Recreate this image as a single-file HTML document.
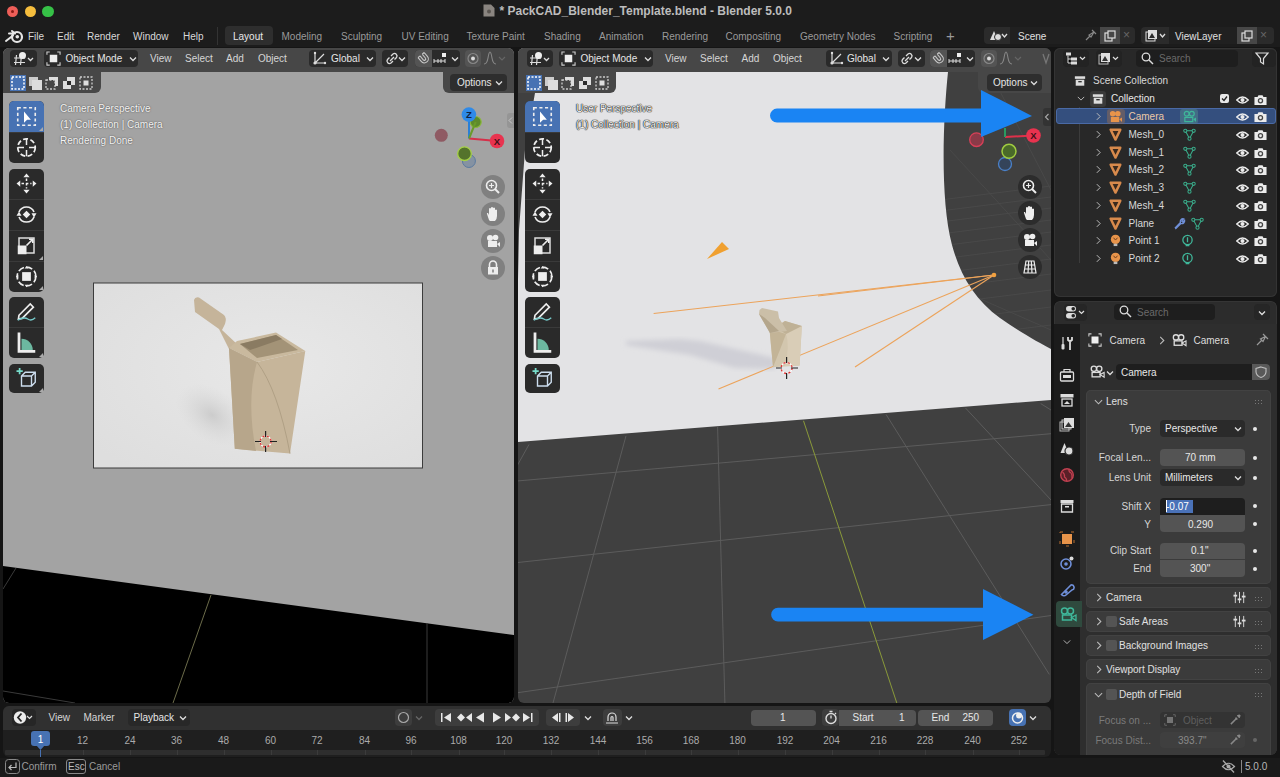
<!DOCTYPE html>
<html><head><meta charset="utf-8">
<style>
*{margin:0;padding:0;box-sizing:border-box}
html,body{width:1280px;height:777px;overflow:hidden;background:#151515;font-family:"Liberation Sans",sans-serif;color:#d0d0d0;font-size:10px}
.a{position:absolute}
.t{position:absolute;white-space:nowrap;line-height:1}
svg{position:absolute;overflow:visible}
.hb{position:absolute;background:#2a2a2a;border-radius:4px}
.tg{position:absolute;background:#2a2a2a;border-radius:5px;width:35px}
.dv{position:absolute;left:0;width:35px;height:1px;background:#3a3a3a}
.nb{position:absolute;width:24px;height:24px;border-radius:50%;background:rgba(40,40,40,0.28)}
.or{position:absolute;white-space:nowrap;line-height:1;color:#d8d8d8}
.ch{position:absolute;width:6px;height:9px}
.pl{position:absolute;white-space:nowrap;line-height:1;color:#d6d6d6;text-align:right}
.pf{position:absolute;background:#545454;border-radius:4px;height:17px}
.pd{position:absolute;background:#282828;border-radius:4px;height:17px}
.dot{position:absolute;width:4px;height:4px;border-radius:50%;background:#e8e8e8}
.pn{position:absolute;left:1086px;width:185px;background:#3b3b3b;border-radius:5px;box-shadow:inset 0 0 0 1px #424242}
.grip{position:absolute;width:9px;height:5px;background-image:radial-gradient(#777 35%,transparent 40%);background-size:3px 3px}
.ov{position:absolute;white-space:nowrap;line-height:1;color:#f4f4f4;text-shadow:0 0 1.5px rgba(0,0,0,.7)}

</style></head><body>
<!-- title bar -->
<div class="a" style="left:0;top:0;width:1280px;height:47px;background:#1c1c1c"></div>
<div class="a" style="left:0;top:758px;width:1280px;height:19px;background:#1a1a1a"></div>
<div class="a" style="left:6.6px;top:5.6px;width:11.2px;height:11.2px;border-radius:50%;background:#ee5e58"></div>
<div class="a" style="left:10.7px;top:9.7px;width:3px;height:3px;border-radius:50%;background:#8b1a14"></div>
<div class="a" style="left:24.6px;top:5.6px;width:11.2px;height:11.2px;border-radius:50%;background:#f5bd3d"></div>
<div class="a" style="left:42.4px;top:5.6px;width:11.2px;height:11.2px;border-radius:50%;background:#36c147"></div>
<svg style="left:483px;top:4px" width="12" height="13" viewBox="0 0 12 13"><path d="M0.5 0.5 H8 L11.5 4 V12.5 H0.5Z" fill="#8a8580"/><circle cx="6" cy="7.5" r="2" fill="#5a5550"/></svg>
<div class="t" style="left:499.5px;top:5px;font-size:12px;font-weight:bold;color:#bdbdbd">* PackCAD_Blender_Template.blend - Blender 5.0.0</div>



<svg width="0" height="0" style="left:0;top:0">
<defs>
<symbol id="i-edtype" viewBox="0 0 26 17"><path d="M3 8 H14 M3 12.5 H14 M5.5 5 L4.5 15 M10.5 5 L9.5 15" stroke="#ddd" stroke-width="1.2" fill="none"/><circle cx="11.5" cy="5.5" r="3.5" fill="#eee"/><path d="M17 8 l2.5 2.5 l2.5 -2.5" stroke="#ddd" stroke-width="1.3" fill="none"/></symbol>
<symbol id="i-objmode" viewBox="0 0 16 16"><path d="M1 4 V1 H4 M12 1 H15 V4 M15 12 V15 H12 M4 15 H1 V12" stroke="#ccc" stroke-width="1.2" fill="none"/><rect x="4" y="4" width="8" height="8" fill="#eee"/></symbol>
<symbol id="i-chev" viewBox="0 0 8 6"><path d="M1 1.5 L4 4.5 L7 1.5" stroke="#ddd" stroke-width="1.3" fill="none"/></symbol>
<symbol id="i-sm1" viewBox="0 0 16 16"><rect x="0" y="0" width="16" height="16" fill="#4772b3"/><rect x="2" y="2" width="12" height="12" fill="none" stroke="#fff" stroke-width="1.5" stroke-dasharray="2 1.5"/></symbol>
<symbol id="i-sm2" viewBox="0 0 16 16"><rect x="2" y="2" width="9" height="9" fill="#ccc"/><rect x="5" y="5" width="10" height="10" fill="#ddd"/></symbol>
<symbol id="i-sm3" viewBox="0 0 16 16"><rect x="2" y="5" width="9" height="9" fill="none" stroke="#ccc" stroke-width="1.3" stroke-dasharray="2 1.5"/><path d="M5 2 H14 V11 H11 V5 H5Z" fill="#ddd"/></symbol>
<symbol id="i-sm4" viewBox="0 0 16 16"><path d="M2 6 H6 V2 H14 V10 H10 V14 H2Z" fill="#ddd"/><rect x="6" y="6" width="4" height="4" fill="#2a2a2a"/></symbol>
<symbol id="i-sm5" viewBox="0 0 16 16"><rect x="2" y="2" width="12" height="12" fill="none" stroke="#ccc" stroke-width="1.3" stroke-dasharray="2 1.5"/><rect x="5.5" y="5.5" width="5" height="5" fill="#ddd"/></symbol>
<symbol id="t-select" viewBox="0 0 20 20"><rect x="3" y="3" width="14" height="14" fill="none" stroke="#eee" stroke-width="1.3" stroke-dasharray="2.5 2"/><path d="M8 6 L8 15 L10.5 12.5 L13.5 12.5 Z" fill="#fff"/></symbol>
<symbol id="t-cursor" viewBox="0 0 20 20"><circle cx="10" cy="10" r="7" fill="none" stroke="#eee" stroke-width="1.4" stroke-dasharray="4 2"/><path d="M10 3 V8 M10 12 V17 M3 10 H8 M12 10 H17" stroke="#eee" stroke-width="1.2"/></symbol>
<symbol id="t-move" viewBox="0 0 20 20"><path d="M10 2 L12.5 5 H7.5Z M10 18 L12.5 15 H7.5Z M2 10 L5 7.5 V12.5Z M18 10 L15 7.5 V12.5Z" fill="#eee"/><path d="M10 6 V14 M6 10 H14" stroke="#eee" stroke-width="1.2" stroke-dasharray="2 1.5"/></symbol>
<symbol id="t-rotate" viewBox="0 0 20 20"><path d="M4 8 A6.5 6.5 0 0 1 16 8 M16 12 A6.5 6.5 0 0 1 4 12" stroke="#eee" stroke-width="1.3" fill="none"/><path d="M2 11 L4 7.5 L6 11Z M14 9 L16 12.5 L18 9Z" fill="#eee"/><path d="M10 7 L13 10 L10 13 L7 10Z" fill="#eee"/></symbol>
<symbol id="t-scale" viewBox="0 0 20 20"><rect x="4" y="4" width="12" height="12" fill="none" stroke="#ddd" stroke-width="1.2"/><rect x="3" y="10" width="7" height="7" fill="#eee"/><path d="M10 10 L15 5 M12 5 H15 V8" stroke="#eee" stroke-width="1.3" fill="none"/></symbol>
<symbol id="t-xform" viewBox="0 0 20 20"><circle cx="10" cy="10" r="7.5" fill="none" stroke="#eee" stroke-width="1.3" stroke-dasharray="5 2"/><rect x="6.5" y="6.5" width="7" height="7" fill="#eee"/><path d="M10 1.5 L11.5 3.5 H8.5Z M10 18.5 L11.5 16.5 H8.5Z M1.5 10 L3.5 8.5 V11.5Z M18.5 10 L16.5 8.5 V11.5Z" fill="#eee"/></symbol>
<symbol id="t-annot" viewBox="0 0 20 20"><path d="M4 13 L13 4 L15.5 6.5 L6.5 15.5 L3.5 16 Z" fill="none" stroke="#eee" stroke-width="1.3"/><path d="M3 17 Q8 14 11 16 Q14 18 17 15" stroke="#7cc" stroke-width="1" fill="none"/></symbol>
<symbol id="t-measure" viewBox="0 0 20 20"><path d="M4 2 V17 H17" stroke="#eee" stroke-width="2.2" fill="none"/><path d="M6 16 V7 A9 9 0 0 1 15 16Z" fill="#6cb8a0"/></symbol>
<symbol id="t-add" viewBox="0 0 20 20"><path d="M2 4 H7 M4.5 1.5 V6.5" stroke="#7dc" stroke-width="1.4"/><path d="M6 8 L9 5 H17 V13 L14 16 H6Z M6 8 H14 V16 M14 8 L17 5" stroke="#cde" stroke-width="1.1" fill="none"/></symbol>
<symbol id="n-zoom" viewBox="0 0 24 24"><circle cx="10.5" cy="10.5" r="5" fill="none" stroke="#eee" stroke-width="1.6"/><path d="M14 14 L18 18" stroke="#eee" stroke-width="2"/><path d="M8 10.5 H13 M10.5 8 V13" stroke="#eee" stroke-width="1.2"/></symbol>
<symbol id="n-hand" viewBox="0 0 24 24"><path d="M8 18 L6 12 Q5.5 10.5 7 11 L8 13 V6.5 Q9 5.5 10 6.5 V11 V5.5 Q11 4.5 12 5.5 V11 V6 Q13 5 14 6 V11.5 V8 Q15 7 16 8 V14 Q16 17 14 19 H9Z" fill="#eee"/></symbol>
<symbol id="n-cam" viewBox="0 0 24 24"><circle cx="9" cy="9" r="3" fill="#eee"/><circle cx="14.5" cy="8.5" r="2.8" fill="#eee"/><rect x="7" y="12" width="9" height="6" fill="#eee"/><path d="M16 15 L19 13 V18 Z" fill="#eee"/></symbol>
<symbol id="n-lock" viewBox="0 0 24 24"><path d="M8.5 11 V8.5 A3.5 3.5 0 0 1 15.5 8.5 V11" stroke="#eee" stroke-width="1.6" fill="none"/><rect x="7" y="11" width="10" height="7.5" fill="#eee"/><rect x="11.3" y="13.5" width="1.4" height="3" fill="#777"/></symbol>
<symbol id="n-grid" viewBox="0 0 24 24"><path d="M8 6 H16 L18 18 H6Z M7 10 H17 M6.5 14 H17.5 M10.7 6 L10 18 M13.3 6 L14 18" stroke="#eee" stroke-width="1.2" fill="none"/></symbol>

<symbol id="o-chevr" viewBox="0 0 6 10"><path d="M1 1 L5 5 L1 9" stroke="#bbb" stroke-width="1.2" fill="none"/></symbol>
<symbol id="o-chevd" viewBox="0 0 10 6"><path d="M1 1 L5 5 L9 1" stroke="#bbb" stroke-width="1.2" fill="none"/></symbol>
<symbol id="o-mesh" viewBox="0 0 14 14"><path d="M1.8 1.8 H12.2 L7 12.5 Z" fill="#3a2a1e" stroke="#d88a4c" stroke-width="2.6" stroke-linejoin="round"/></symbol>
<symbol id="o-meshdata" viewBox="0 0 14 14"><path d="M2.5 3 L11.5 3 L7 11.5 Z" fill="none" stroke="#3aae8c" stroke-width="1.1"/><circle cx="2.5" cy="3" r="1.7" fill="#282828" stroke="#3aae8c" stroke-width="1.1"/><circle cx="11.5" cy="3" r="1.7" fill="#282828" stroke="#3aae8c" stroke-width="1.1"/><circle cx="7" cy="11.5" r="1.7" fill="#282828" stroke="#3aae8c" stroke-width="1.1"/></symbol>
<symbol id="o-light" viewBox="0 0 14 14"><circle cx="7" cy="5.8" r="5" fill="#e8944a"/><path d="M4.8 4 L7 6.5 L9.2 4" stroke="#6a3a1a" stroke-width="1" fill="none"/><rect x="5" y="10.5" width="4" height="2.5" fill="#bbb"/></symbol>
<symbol id="o-lightdata" viewBox="0 0 14 14"><circle cx="7" cy="6.5" r="5" fill="none" stroke="#3fb79a" stroke-width="1.4"/><path d="M7 3.5 V9 M5 12.5 H9" stroke="#3fb79a" stroke-width="1.4"/></symbol>
<symbol id="o-eye" viewBox="0 0 14 10"><path d="M0.8 5 Q7 -1.5 13.2 5 Q7 11.5 0.8 5Z" fill="none" stroke="#ececec" stroke-width="1.5"/><circle cx="7" cy="5" r="2.2" fill="#ececec"/></symbol>
<symbol id="o-cam" viewBox="0 0 14 12"><path d="M0.5 2.8 H3.8 L4.8 0.8 H9.2 L10.2 2.8 H13.5 V11.5 H0.5Z" fill="#ececec"/><circle cx="7" cy="6.8" r="2.9" fill="#444"/><circle cx="7" cy="6.8" r="1.5" fill="#ececec"/></symbol>
<symbol id="o-box" viewBox="0 0 14 14"><rect x="1" y="1.5" width="12" height="3" fill="#ddd"/><path d="M2 5.5 H12 V12.5 H2Z" fill="#ddd"/><rect x="5" y="7" width="4" height="1.6" fill="#333"/></symbol>
<symbol id="o-camobj" viewBox="0 0 16 14"><circle cx="5" cy="4" r="3" fill="#e8944a"/><circle cx="10.5" cy="4" r="3" fill="#e8944a"/><rect x="3" y="7.5" width="9" height="5.5" fill="#e8944a"/><path d="M12 10 L15 8 V13 Z" fill="#e8944a"/></symbol>
<symbol id="o-camdata" viewBox="0 0 16 14"><circle cx="5" cy="4" r="2.6" fill="none" stroke="#3fb79a" stroke-width="1.3"/><circle cx="10.5" cy="4" r="2.6" fill="none" stroke="#3fb79a" stroke-width="1.3"/><rect x="3" y="8" width="8.5" height="4.5" fill="none" stroke="#3fb79a" stroke-width="1.3"/><path d="M12 10 L15 8 V13 Z" fill="#3fb79a"/></symbol>
<symbol id="o-wrench" viewBox="0 0 14 14"><path d="M2 12 L8 6 A3 3 0 0 1 11.5 2 L9.5 4.5 L10.5 5.5 L12.5 3.5 A3 3 0 0 1 8.5 7 L2.5 13" stroke="#6f8fd8" stroke-width="1.4" fill="none"/></symbol>

<symbol id="p-tool" viewBox="0 0 16 16"><path d="M4 2 V9" stroke="#ddd" stroke-width="1.2"/><rect x="2.5" y="9" width="3" height="5.5" rx="1" fill="#ddd"/><path d="M11 15 V7 M9 2 V5 Q11 7 13 5 V2" stroke="#ddd" stroke-width="1.8" fill="none"/></symbol>
<symbol id="p-render" viewBox="0 0 16 16"><rect x="1.5" y="5" width="13" height="9" rx="1" fill="none" stroke="#ddd" stroke-width="1.3"/><path d="M5 5 V2.5 H11 V5" stroke="#ddd" stroke-width="1.2" fill="none"/><rect x="4" y="8" width="8" height="3" fill="#ddd"/></symbol>
<symbol id="p-output" viewBox="0 0 16 16"><rect x="1.5" y="2" width="13" height="3.5" fill="#ddd"/><rect x="3" y="7" width="10" height="7" fill="none" stroke="#ddd" stroke-width="1.3"/><path d="M5 12 L8 9 L11 12Z" fill="#ddd"/></symbol>
<symbol id="p-viewlayer" viewBox="0 0 16 16"><rect x="1" y="5" width="9" height="9" fill="none" stroke="#bbb" stroke-width="1"/><rect x="3" y="3" width="9" height="9" fill="none" stroke="#ccc" stroke-width="1"/><rect x="5" y="1" width="10" height="10" fill="#ddd"/><path d="M6 10 L9.5 5 L13 10Z" fill="#333"/></symbol>
<symbol id="p-scene" viewBox="0 0 16 16"><path d="M1.5 12 L5.5 2 L9.5 12Z" fill="#ddd"/><circle cx="10" cy="10" r="4" fill="#ddd" stroke="#2a2a2a" stroke-width="1.2"/></symbol>
<symbol id="p-world" viewBox="0 0 16 16"><circle cx="8" cy="8" r="6.3" fill="#5a2028" stroke="#c04050" stroke-width="1.4"/><path d="M3.5 5 Q6 7 5.5 10 Q8 11.5 7.5 14 M10 2.2 Q9.5 5 12 6 Q13.5 8 13 11" stroke="#c04050" stroke-width="1.2" fill="none"/></symbol>
<symbol id="p-coll" viewBox="0 0 16 16"><rect x="1.5" y="2" width="13" height="3" fill="#ddd"/><path d="M2.5 6 H13.5 V14 H2.5Z" fill="none" stroke="#ddd" stroke-width="1.3"/><rect x="6" y="8" width="4" height="1.5" fill="#ddd"/></symbol>
<symbol id="p-obj" viewBox="0 0 16 16"><rect x="1" y="1" width="14" height="14" fill="none" stroke="#b86f30" stroke-width="1" stroke-dasharray="3 8"/><rect x="3" y="3" width="10" height="10" fill="#e8944a"/></symbol>
<symbol id="p-phys" viewBox="0 0 16 16"><circle cx="7" cy="9" r="5" fill="none" stroke="#6f8fd8" stroke-width="1.6"/><circle cx="7" cy="9" r="1.8" fill="#6f8fd8"/><circle cx="12.5" cy="3.5" r="2" fill="#ddd"/></symbol>
<symbol id="p-cons" viewBox="0 0 16 16"><path d="M2.5 13.5 L12 4 A2.5 2.5 0 0 1 13 9 L7 14 A3 3 0 0 1 2.5 13.5Z" fill="none" stroke="#6f8fd8" stroke-width="1.6"/><circle cx="7" cy="11" r="1.8" fill="#6f8fd8"/></symbol>
<symbol id="p-camdata" viewBox="0 0 18 16"><circle cx="5.5" cy="5" r="3" fill="none" stroke="#3fb79a" stroke-width="1.5"/><circle cx="11.5" cy="5" r="3" fill="none" stroke="#3fb79a" stroke-width="1.5"/><rect x="3.5" y="9" width="9" height="5" fill="none" stroke="#3fb79a" stroke-width="1.5"/><path d="M12.5 11.5 L17 9 V14.5Z" fill="none" stroke="#3fb79a" stroke-width="1.3"/></symbol>
<symbol id="p-camw" viewBox="0 0 18 16"><circle cx="5.5" cy="5" r="3" fill="none" stroke="#ddd" stroke-width="1.5"/><circle cx="11.5" cy="5" r="3" fill="none" stroke="#ddd" stroke-width="1.5"/><rect x="3.5" y="9" width="9" height="5" fill="none" stroke="#ddd" stroke-width="1.5"/><path d="M12.5 11.5 L17 9 V14.5Z" fill="none" stroke="#ddd" stroke-width="1.3"/></symbol>
<symbol id="p-sliders" viewBox="0 0 14 14"><path d="M2.5 1 V13 M7 1 V13 M11.5 1 V13" stroke="#ddd" stroke-width="1"/><rect x="0.5" y="4" width="4" height="2" fill="#ddd"/><rect x="5" y="8" width="4" height="2" fill="#ddd"/><rect x="9.5" y="5" width="4" height="2" fill="#ddd"/></symbol>
<symbol id="p-pipette" viewBox="0 0 14 14"><path d="M2 12 L8 6 M7 5 L9 7 M9 3 A2 2 0 0 1 11 5" stroke="#888" stroke-width="1.6" fill="none"/><path d="M8.5 2.5 L11.5 5.5 L12.5 3 Q12 1.5 11 1.5Z" fill="#888"/></symbol>
</defs></svg>

<!-- menu bar -->
<svg style="left:4px;top:28px" width="20" height="16" viewBox="0 0 20 16"><circle cx="13" cy="9" r="5" fill="none" stroke="#e6e6e6" stroke-width="2.2"/><circle cx="13.3" cy="8.8" r="1.8" fill="#e6e6e6"/><path d="M2 13 L9 7.5 M5 5.5 H11 M8 3 L11 5.5" stroke="#e6e6e6" stroke-width="2" stroke-linecap="round" fill="none"/></svg>
<div class="t" style="left:28px;top:32px;color:#d8d8d8">File</div>
<div class="t" style="left:57px;top:32px;color:#d8d8d8">Edit</div>
<div class="t" style="left:87px;top:32px;color:#d8d8d8">Render</div>
<div class="t" style="left:133px;top:32px;color:#d8d8d8">Window</div>
<div class="t" style="left:183px;top:32px;color:#d8d8d8">Help</div>
<div class="a" style="left:217px;top:27px;width:1px;height:18px;background:#333"></div>
<div class="a" style="left:225px;top:26px;width:48px;height:19px;background:#2e2e2e;border-radius:4px"></div>
<div class="t" style="left:233px;top:32px;color:#e8e8e8">Layout</div>
<div class="t" style="left:281.5px;top:32px;color:#9a9a9a">Modeling</div>
<div class="t" style="left:341px;top:32px;color:#9a9a9a">Sculpting</div>
<div class="t" style="left:401.5px;top:32px;color:#9a9a9a">UV Editing</div>
<div class="t" style="left:466.5px;top:32px;color:#9a9a9a">Texture Paint</div>
<div class="t" style="left:544px;top:32px;color:#9a9a9a">Shading</div>
<div class="t" style="left:599px;top:32px;color:#9a9a9a">Animation</div>
<div class="t" style="left:662px;top:32px;color:#9a9a9a">Rendering</div>
<div class="t" style="left:725.5px;top:32px;color:#9a9a9a">Compositing</div>
<div class="t" style="left:800px;top:32px;color:#9a9a9a">Geometry Nodes</div>
<div class="t" style="left:893.5px;top:32px;color:#9a9a9a">Scripting</div>
<div class="t" style="left:946px;top:28px;font-size:15px;color:#9a9a9a">+</div>
<!-- scene selector -->
<div class="a" style="left:984px;top:27px;width:151px;height:17px;background:#2b2b2b;border-radius:4px"></div>
<div class="a" style="left:1010px;top:27px;width:90px;height:17px;background:#202020"></div>
<svg style="left:988px;top:29px" width="20" height="13" viewBox="0 0 20 13"><path d="M2 11 L6 2 L10 11 Z" fill="#ddd"/><circle cx="10" cy="8" r="3.5" fill="#ddd" stroke="#2b2b2b" stroke-width="1"/><path d="M14 5 l2.5 3 l2.5 -3" stroke="#ddd" stroke-width="1.3" fill="none"/></svg>
<div class="t" style="left:1018px;top:32px;color:#e0e0e0">Scene</div>
<svg style="left:1085px;top:29px" width="12" height="12" viewBox="0 0 12 12"><path d="M7 1 L11 5 M9 3 L4 6 L6 8 L9 3 M5 7 L1 11" stroke="#888" stroke-width="1.2" fill="none"/></svg>
<div class="a" style="left:1100px;top:27px;width:20px;height:17px;background:#474747"></div>
<svg style="left:1104px;top:30px" width="12" height="12" viewBox="0 0 12 12"><rect x="1" y="3" width="7" height="8" fill="none" stroke="#ddd" stroke-width="1.2"/><rect x="4" y="1" width="7" height="7" fill="#474747" stroke="#ddd" stroke-width="1.2"/></svg>
<div class="t" style="left:1123px;top:29px;font-size:12px;color:#666">×</div>
<div class="a" style="left:1141px;top:27px;width:133px;height:17px;background:#2b2b2b;border-radius:4px"></div>
<div class="a" style="left:1169px;top:27px;width:68px;height:17px;background:#202020"></div>
<svg style="left:1145px;top:29px" width="22" height="13" viewBox="0 0 22 13"><rect x="1" y="3" width="9" height="9" fill="none" stroke="#ddd" stroke-width="1"/><rect x="3" y="1" width="9" height="9" fill="#ddd"/><path d="M4 9 L7 4 L10 9Z" fill="#2b2b2b"/><path d="M15 5 l2.5 3 l2.5 -3" stroke="#ddd" stroke-width="1.3" fill="none"/></svg>
<div class="t" style="left:1175px;top:32px;color:#e0e0e0">ViewLayer</div>
<div class="a" style="left:1237px;top:27px;width:20px;height:17px;background:#474747"></div>
<svg style="left:1241px;top:30px" width="12" height="12" viewBox="0 0 12 12"><rect x="1" y="3" width="7" height="8" fill="none" stroke="#ddd" stroke-width="1.2"/><rect x="4" y="1" width="7" height="7" fill="#474747" stroke="#ddd" stroke-width="1.2"/></svg>
<div class="t" style="left:1260px;top:29px;font-size:12px;color:#666">×</div>

<!-- left viewport -->

<svg style="left:0;top:0" width="1280" height="777">
<defs><clipPath id="cvl"><rect x="3" y="48" width="511" height="655" rx="6"/></clipPath>
<radialGradient id="rimg" cx="0.55" cy="0.45" r="0.7"><stop offset="0" stop-color="#e8e8e8"/><stop offset="1" stop-color="#dedede"/></radialGradient>
<radialGradient id="shad" cx="0.5" cy="0.5" r="0.5"><stop offset="0" stop-color="#c6c6c6" stop-opacity="0.8"/><stop offset="1" stop-color="#d6d6d6" stop-opacity="0"/></radialGradient>
</defs>
<g clip-path="url(#cvl)">
<rect x="3" y="48" width="511" height="655" fill="#a3a3a3"/>
<polygon points="3,566 514,635 514,703 3,703" fill="#000"/>
<line x1="211" y1="595" x2="173" y2="703" stroke="#6b6b4a" stroke-width="1"/>
<line x1="427" y1="623" x2="427" y2="703" stroke="#3a3a3a" stroke-width="1"/>
<line x1="3" y1="691" x2="75" y2="703" stroke="#3a3a3a" stroke-width="1"/>
<line x1="16" y1="568" x2="3" y2="589" stroke="#3a3a3a" stroke-width="1"/>
<rect x="93.5" y="283" width="329" height="185" fill="url(#rimg)" stroke="#3c3c3c" stroke-width="1"/>
<ellipse cx="212" cy="415" rx="40" ry="26" fill="url(#shad)" transform="rotate(35 212 415)"/>
<path d="M194,300 Q195,296.5 199,297.5 L224,315 Q227,318 225,324 L222,330 L238,345 L229,349 L219,329 L195,312 Z" fill="#c5b49a"/>
<polygon points="229,348 237,341 276,332.6 305.3,351 257,362" fill="#c9b99e"/>
<polygon points="240,344 276,335 298,350 257,358" fill="#a39377"/>
<polygon points="240,344 276,335 282,339 250,350" fill="#8a7b62"/>
<polygon points="229,348 257,362 305.3,351 290,453.6 260.5,451 234.8,448.8" fill="#c6b59a"/>
<path d="M229,348 L257,362 Q246,400 256,451 L234.8,448.8 Z" fill="#b7a68b"/>
<path d="M257,362 Q278,390 290,453.6" stroke="#b0a085" stroke-width="1" fill="none"/>
<circle cx="265.6" cy="441.5" r="5.5" fill="none" stroke="#fff" stroke-width="1.3"/><circle cx="265.6" cy="441.5" r="5.5" fill="none" stroke="#d33" stroke-width="1.3" stroke-dasharray="2.2 2.2"/>
<path d="M255 441.5 H261 M270 441.5 H277 M265.6 431 V437 M265.6 446 V452" stroke="#222" stroke-width="1.2"/>
</g></svg>


<div class="a" style="left:3px;top:48px;width:511px;height:24px;background:#474747;border-radius:6px 6px 0 0"></div>
<div class="a" style="left:3px;top:72px;width:98px;height:21px;background:#474747;border-radius:0 0 6px 0"></div>

<div class="hb" style="left:10px;top:50px;width:27px;height:17px"></div>
<svg style="left:11px;top:50px" width="26" height="17"><use href="#i-edtype"/></svg>
<div class="hb" style="left:44px;top:50px;width:94px;height:17px"></div>
<svg style="left:46px;top:51px" width="15" height="15"><use href="#i-objmode"/></svg>
<div class="t" style="left:65.5px;top:54px;color:#e6e6e6">Object Mode</div>
<svg style="left:129px;top:56px" width="8" height="6"><use href="#i-chev"/></svg>
<div class="t" style="left:150px;top:54px;color:#d6d6d6">View</div>
<div class="t" style="left:185px;top:54px;color:#d6d6d6">Select</div>
<div class="t" style="left:226px;top:54px;color:#d6d6d6">Add</div>
<div class="t" style="left:258px;top:54px;color:#d6d6d6">Object</div>
<div class="hb" style="left:309px;top:50px;width:67px;height:17px"></div>
<svg style="left:312px;top:51px" width="15" height="15" viewBox="0 0 15 15"><path d="M3 1 V12 H14 M3 12 L12 3" stroke="#ddd" stroke-width="1.2" fill="none"/><circle cx="3" cy="12" r="1.6" fill="#ddd"/><circle cx="3" cy="2" r="1.2" fill="#ddd"/><circle cx="13" cy="12" r="1.2" fill="#ddd"/></svg>
<div class="t" style="left:331px;top:54px;color:#e6e6e6">Global</div>
<svg style="left:366px;top:56px" width="8" height="6"><use href="#i-chev"/></svg>
<div class="hb" style="left:382px;top:50px;width:26px;height:17px"></div>
<svg style="left:385px;top:51px" width="14" height="15" viewBox="0 0 14 15"><path d="M6 5 L8 3 A2.5 2.5 0 0 1 11.5 6.5 L9.5 8.5 M8 10 L6 12 A2.5 2.5 0 0 1 2.5 8.5 L4.5 6.5 M5 10 L9 6" stroke="#ddd" stroke-width="1.3" fill="none"/></svg>
<svg style="left:398px;top:56px" width="8" height="6"><use href="#i-chev"/></svg>
<div class="hb" style="left:415px;top:50px;width:45px;height:17px;background:#2a2a2a"></div>
<div class="a" style="left:415px;top:50px;width:17px;height:17px;background:#545454;border-radius:4px 0 0 4px"></div>
<svg style="left:417px;top:51px" width="14" height="15" viewBox="0 0 14 15"><g transform="rotate(-40 7 7.5)"><path d="M3 3 V8 A4 4 0 0 0 11 8 V3 M5.6 3 V8 A1.4 1.4 0 0 0 8.4 8 V3 M3 3 H5.6 M8.4 3 H11" stroke="#c8c8c8" stroke-width="1.1" fill="none"/></g></svg>
<svg style="left:433px;top:51px" width="18" height="15" viewBox="0 0 18 15"><path d="M1 10 H12 M1 8 V12 M5 8 V12 M8 8 V12 M12 8 V12" stroke="#ddd" stroke-width="1"/><rect x="9" y="2" width="4" height="4" fill="#eee"/></svg>
<svg style="left:451px;top:56px" width="8" height="6"><use href="#i-chev"/></svg>
<div class="a" style="left:465px;top:50px;width:16px;height:17px;background:#545454;border-radius:4px"></div>
<svg style="left:466px;top:51px" width="14" height="15" viewBox="0 0 14 15"><circle cx="7" cy="7.5" r="5" fill="none" stroke="#888" stroke-width="1.2"/><circle cx="7" cy="7.5" r="2" fill="#ddd"/></svg>
<svg style="left:483px;top:51px" width="30" height="15" viewBox="0 0 30 15"><path d="M1 13 Q4 13 5 7 Q6 1 7 1 Q8 1 9 7 Q10 13 13 13" stroke="#888" stroke-width="1.1" fill="none"/><path d="M16 6 l3 3 l3 -3" stroke="#666" stroke-width="1.2" fill="none"/></svg>
<svg style="left:10px;top:75px" width="16" height="16"><use href="#i-sm1"/></svg>
<svg style="left:27px;top:75px" width="16" height="16"><use href="#i-sm2"/></svg>
<svg style="left:44px;top:75px" width="16" height="16"><use href="#i-sm3"/></svg>
<svg style="left:61px;top:75px" width="16" height="16"><use href="#i-sm4"/></svg>
<svg style="left:78px;top:75px" width="16" height="16"><use href="#i-sm5"/></svg>
<div class="a" style="left:443px;top:72px;width:71px;height:21px;background:#474747;border-radius:0 0 0 6px"></div>
<div class="hb" style="left:450px;top:74px;width:57px;height:17px;background:#2e2e2e"></div>
<div class="t" style="left:457px;top:78px;color:#e6e6e6">Options</div>
<svg style="left:495px;top:80px" width="8" height="6"><use href="#i-chev"/></svg>
<!-- toolbar -->
<div class="tg" style="left:9px;top:101px;height:62px"><div class="a" style="left:0;top:0;width:35px;height:31px;background:#4772b3;border-radius:5px 5px 0 0"></div><div class="dv" style="top:31px"></div></div>
<svg style="left:14.0px;top:103.5px" width="25" height="25"><use href="#t-select"/></svg>
<svg style="left:14.0px;top:134.5px" width="25" height="25"><use href="#t-cursor"/></svg>
<div class="tg" style="left:9px;top:168.5px;height:123px"><div class="dv" style="top:30px"></div><div class="dv" style="top:61px"></div><div class="dv" style="top:92px"></div></div>
<svg style="left:14.0px;top:170.5px" width="25" height="25"><use href="#t-move"/></svg>
<svg style="left:14.0px;top:201.5px" width="25" height="25"><use href="#t-rotate"/></svg>
<svg style="left:14.0px;top:232.5px" width="25" height="25"><use href="#t-scale"/></svg>
<svg style="left:14.0px;top:263.5px" width="25" height="25"><use href="#t-xform"/></svg>
<div class="tg" style="left:9px;top:297px;height:61px"><div class="dv" style="top:30px"></div></div>
<svg style="left:14.0px;top:298.5px" width="25" height="25"><use href="#t-annot"/></svg>
<svg style="left:14.0px;top:329.5px" width="25" height="25"><use href="#t-measure"/></svg>
<div class="tg" style="left:9px;top:364px;height:29px"></div>
<svg style="left:14.0px;top:365.5px" width="25" height="25"><use href="#t-add"/></svg>
<svg style="left:39px;top:126.5px" width="4" height="4" viewBox="0 0 4 4"><path d="M4 0 V4 H0Z" fill="#aaa"/></svg>
<svg style="left:39px;top:255.5px" width="4" height="4" viewBox="0 0 4 4"><path d="M4 0 V4 H0Z" fill="#aaa"/></svg>
<svg style="left:39px;top:286px" width="4" height="4" viewBox="0 0 4 4"><path d="M4 0 V4 H0Z" fill="#aaa"/></svg>
<svg style="left:39px;top:352.5px" width="4" height="4" viewBox="0 0 4 4"><path d="M4 0 V4 H0Z" fill="#aaa"/></svg>
<svg style="left:39px;top:387.5px" width="4" height="4" viewBox="0 0 4 4"><path d="M4 0 V4 H0Z" fill="#aaa"/></svg>
<svg style="left:555px;top:126.5px" width="4" height="4" viewBox="0 0 4 4"><path d="M4 0 V4 H0Z" fill="#aaa"/></svg>
<svg style="left:555px;top:255.5px" width="4" height="4" viewBox="0 0 4 4"><path d="M4 0 V4 H0Z" fill="#aaa"/></svg>
<svg style="left:555px;top:286px" width="4" height="4" viewBox="0 0 4 4"><path d="M4 0 V4 H0Z" fill="#aaa"/></svg>
<svg style="left:555px;top:352.5px" width="4" height="4" viewBox="0 0 4 4"><path d="M4 0 V4 H0Z" fill="#aaa"/></svg>
<svg style="left:555px;top:387.5px" width="4" height="4" viewBox="0 0 4 4"><path d="M4 0 V4 H0Z" fill="#aaa"/></svg>
<!-- overlay text -->
<div class="ov" style="left:60px;top:104px">Camera Perspective</div>
<div class="ov" style="left:60px;top:120px">(1) Collection | Camera</div>
<div class="ov" style="left:60px;top:136px">Rendering Done</div>
<!-- gizmo -->
<svg style="left:430px;top:100px" width="80" height="70" viewBox="430 100 80 70">
<circle cx="441.3" cy="135.3" r="6.5" fill="#8f5a63"/>
<circle cx="468.9" cy="161" r="6.5" fill="#8592a2" stroke="#5a7aa0" stroke-width="1"/>
<circle cx="475.7" cy="122" r="5.5" fill="#5e8a2c" stroke="#8ab93a" stroke-width="1.2"/>
<line x1="469" y1="138.5" x2="469" y2="115" stroke="#2a7fd6" stroke-width="2"/>
<line x1="469" y1="138.5" x2="497" y2="141" stroke="#d6304a" stroke-width="2"/>
<line x1="469" y1="138.5" x2="475.7" y2="122" stroke="#6a9b2a" stroke-width="2"/>
<circle cx="468.9" cy="114.6" r="7.3" fill="#2f8ae8"/>
<text x="468.9" y="118.3" font-family="Liberation Sans" font-size="9.5" font-weight="bold" text-anchor="middle" fill="#102040">Z</text>
<circle cx="497" cy="141" r="7.3" fill="#e8334f"/>
<text x="497" y="144.5" font-family="Liberation Sans" font-size="9.5" font-weight="bold" text-anchor="middle" fill="#401018">X</text>
<circle cx="464.5" cy="153.7" r="6.8" fill="#54732c" stroke="#a5d046" stroke-width="1.3"/>
</svg>
<div class="a" style="left:507px;top:113px;width:7px;height:15px;background:#959595;border-radius:3px 0 0 3px"></div><svg style="left:508px;top:117px" width="5" height="7" viewBox="0 0 5 7"><path d="M4 0.5 L1 3.5 L4 6.5" stroke="#c8c8c8" stroke-width="1" fill="none"/></svg>
<div class="nb" style="left:481px;top:174.5px"></div><svg style="left:481px;top:174.5px" width="24" height="24"><use href="#n-zoom"/></svg>
<div class="nb" style="left:481px;top:201.5px"></div><svg style="left:481px;top:201.5px" width="24" height="24"><use href="#n-hand"/></svg>
<div class="nb" style="left:481px;top:228.5px"></div><svg style="left:481px;top:228.5px" width="24" height="24"><use href="#n-cam"/></svg>
<div class="nb" style="left:481px;top:255.5px"></div><svg style="left:481px;top:255.5px" width="24" height="24"><use href="#n-lock"/></svg>

<!-- right viewport -->

<svg style="left:0;top:0" width="1280" height="777">
<defs><clipPath id="cvr"><rect x="518" y="48" width="533" height="655" rx="6"/></clipPath>
<radialGradient id="shad2" cx="0.5" cy="0.5" r="0.5"><stop offset="0" stop-color="#c4c4c8" stop-opacity="0.9"/><stop offset="1" stop-color="#dcdce0" stop-opacity="0"/></radialGradient>
</defs>
<g clip-path="url(#cvr)">
<rect x="518" y="48" width="533" height="655" fill="#404040"/>
<g stroke="#4b4b4b" stroke-width="0.8" fill="none"><line x1="940" y1="200" x2="1051" y2="186"/><line x1="940" y1="211" x2="1051" y2="197"/><line x1="940" y1="222" x2="1051" y2="208"/><line x1="940" y1="234" x2="1051" y2="220"/><line x1="940" y1="246" x2="1051" y2="232"/><line x1="940" y1="259" x2="1051" y2="245"/><line x1="940" y1="273" x2="1051" y2="259"/><line x1="940" y1="288" x2="1051" y2="274"/><line x1="940" y1="304" x2="1051" y2="290"/><line x1="940" y1="321" x2="1051" y2="307"/><line x1="940" y1="339" x2="1051" y2="325"/><line x1="950" y1="150" x2="1051" y2="260"/><line x1="990" y1="72" x2="1051" y2="190"/><line x1="960" y1="290" x2="1051" y2="330"/></g>
<path d="M518 48 H950 L948 72 C943 120 940 200 952 245 C960 275 975 300 1000 318 C1020 332 1040 343 1051 349 V400 L518 442 Z" fill="#e3e3e5"/>
<polygon points="518,48 548,48 535,93 525,150 519,230 518,280" fill="#404040"/>
<g stroke="#5c5c5c" stroke-width="1" fill="none">
<line x1="517" y1="481" x2="1051" y2="433.7"/>
<line x1="517" y1="562.6" x2="1051" y2="504.6"/>
<line x1="517" y1="692.8" x2="1051" y2="615.5"/>
<line x1="717.6" y1="427" x2="724.9" y2="703"/>
<line x1="626" y1="435.9" x2="553" y2="703"/>
<line x1="529" y1="444.5" x2="517" y2="466"/>
<line x1="886" y1="414.4" x2="1049.3" y2="674.4"/>
<line x1="965.5" y1="408" x2="1051" y2="500"/>
<line x1="1040.7" y1="403.6" x2="1051" y2="410"/>
</g>
<line x1="803.5" y1="420.8" x2="896.8" y2="703" stroke="#8a9a3a" stroke-width="1"/>
<filter id="blr"><feGaussianBlur stdDeviation="2.5"/></filter>
<polygon points="626,341 680,339 700,341 775,358 775,369 735,368 690,355 626,345" fill="#cfcfd6" filter="url(#blr)"/>
<g stroke="#eca35a" stroke-width="1.1" fill="none">
<line x1="994" y1="275" x2="653.6" y2="313.5"/>
<line x1="994" y1="275" x2="818" y2="296"/>
<line x1="994" y1="275" x2="718.5" y2="389"/>
<line x1="994" y1="275" x2="855" y2="367"/>
</g>
<circle cx="994" cy="275" r="2.3" fill="#f0a040"/>
<polygon points="707,259 722,242 729,249" fill="#f0a030"/>
<polygon points="769.5,329 785,321 801.8,326 799.6,365.6 773,367.3" fill="#d2c6ae"/>
<path d="M769.5,329 L786,334 Q780,350 773,367.3 Z" fill="#c3b497"/>
<path d="M786,334 L801.8,326 L799.6,365.6 L785,366 Q790,345 786,334Z" fill="#d9cdb7"/>
<polygon points="785,321 801.8,326 786,334 776,328" fill="#bfb196"/>
<polygon points="759.5,310 762,308 778,311.5 779,318 787,331 770,333 759,314" fill="#cbbfa8"/>
<polygon points="759,314 770,333 779,331 765,318" fill="#b4a68c"/>
<circle cx="786.6" cy="368" r="5.5" fill="none" stroke="#fff" stroke-width="1.3"/><circle cx="786.6" cy="368" r="5.5" fill="none" stroke="#d33" stroke-width="1.3" stroke-dasharray="2.2 2.2"/>
<path d="M776 368 H782 M791 368 H798 M786.6 357 V363 M786.6 373 V379" stroke="#222" stroke-width="1.2"/>
</g>
</svg>

<div class="a" style="left:518px;top:48px;width:533px;height:24px;background:#474747;border-radius:6px 6px 0 0"></div>
<div class="a" style="left:518px;top:72px;width:98px;height:21px;background:#474747;border-radius:0 0 6px 0"></div>
<div class="a" style="left:978px;top:72px;width:73px;height:21px;background:#474747;border-radius:0 0 0 6px"></div>
<div class="hb" style="left:527px;top:50px;width:26px;height:17px"></div>
<svg style="left:527px;top:50px" width="26" height="17"><use href="#i-edtype"/></svg>
<div class="hb" style="left:559px;top:50px;width:94px;height:17px"></div>
<svg style="left:561px;top:51px" width="15" height="15"><use href="#i-objmode"/></svg>
<div class="t" style="left:580.5px;top:54px;color:#e6e6e6">Object Mode</div>
<svg style="left:644px;top:56px" width="8" height="6"><use href="#i-chev"/></svg>
<div class="t" style="left:665px;top:54px;color:#d6d6d6">View</div>
<div class="t" style="left:700px;top:54px;color:#d6d6d6">Select</div>
<div class="t" style="left:741.5px;top:54px;color:#d6d6d6">Add</div>
<div class="t" style="left:773px;top:54px;color:#d6d6d6">Object</div>
<div class="hb" style="left:826px;top:50px;width:66px;height:17px"></div>
<svg style="left:829px;top:51px" width="15" height="15" viewBox="0 0 15 15"><path d="M3 1 V12 H14 M3 12 L12 3" stroke="#ddd" stroke-width="1.2" fill="none"/><circle cx="3" cy="12" r="1.6" fill="#ddd"/><circle cx="3" cy="2" r="1.2" fill="#ddd"/><circle cx="13" cy="12" r="1.2" fill="#ddd"/></svg>
<div class="t" style="left:847px;top:54px;color:#e6e6e6">Global</div>
<svg style="left:882px;top:56px" width="8" height="6"><use href="#i-chev"/></svg>
<div class="hb" style="left:897.5px;top:50px;width:27px;height:17px"></div>
<svg style="left:900px;top:51px" width="14" height="15" viewBox="0 0 14 15"><path d="M6 5 L8 3 A2.5 2.5 0 0 1 11.5 6.5 L9.5 8.5 M8 10 L6 12 A2.5 2.5 0 0 1 2.5 8.5 L4.5 6.5 M5 10 L9 6" stroke="#ddd" stroke-width="1.3" fill="none"/></svg>
<svg style="left:914px;top:56px" width="8" height="6"><use href="#i-chev"/></svg>
<div class="hb" style="left:930px;top:50px;width:45px;height:17px"></div>
<div class="a" style="left:930px;top:50px;width:17px;height:17px;background:#545454;border-radius:4px 0 0 4px"></div>
<svg style="left:932px;top:51px" width="14" height="15" viewBox="0 0 14 15"><g transform="rotate(-40 7 7.5)"><path d="M3 3 V8 A4 4 0 0 0 11 8 V3 M5.6 3 V8 A1.4 1.4 0 0 0 8.4 8 V3 M3 3 H5.6 M8.4 3 H11" stroke="#c8c8c8" stroke-width="1.1" fill="none"/></g></svg>
<svg style="left:948px;top:51px" width="18" height="15" viewBox="0 0 18 15"><path d="M1 10 H12 M1 8 V12 M5 8 V12 M8 8 V12 M12 8 V12" stroke="#ddd" stroke-width="1"/><rect x="9" y="2" width="4" height="4" fill="#eee"/></svg>
<svg style="left:966px;top:56px" width="8" height="6"><use href="#i-chev"/></svg>
<div class="a" style="left:981px;top:50px;width:16px;height:17px;background:#545454;border-radius:4px"></div>
<svg style="left:982px;top:51px" width="14" height="15" viewBox="0 0 14 15"><circle cx="7" cy="7.5" r="5" fill="none" stroke="#888" stroke-width="1.2"/><circle cx="7" cy="7.5" r="2" fill="#ddd"/></svg>
<svg style="left:999px;top:51px" width="30" height="15" viewBox="0 0 30 15"><path d="M1 13 Q4 13 5 7 Q6 1 7 1 Q8 1 9 7 Q10 13 13 13" stroke="#888" stroke-width="1.1" fill="none"/><path d="M16 6 l3 3 l3 -3" stroke="#666" stroke-width="1.2" fill="none"/></svg>
<svg style="left:1042px;top:52px" width="8" height="13" viewBox="0 0 8 13"><path d="M1 2 L4 11 L7 2" stroke="#777" stroke-width="1.3" fill="none"/></svg>
<svg style="left:526px;top:75px" width="16" height="16"><use href="#i-sm1"/></svg>
<svg style="left:543px;top:75px" width="16" height="16"><use href="#i-sm2"/></svg>
<svg style="left:560px;top:75px" width="16" height="16"><use href="#i-sm3"/></svg>
<svg style="left:577px;top:75px" width="16" height="16"><use href="#i-sm4"/></svg>
<svg style="left:594px;top:75px" width="16" height="16"><use href="#i-sm5"/></svg>
<div class="hb" style="left:987px;top:74px;width:55px;height:17px;background:#2e2e2e"></div>
<div class="t" style="left:993px;top:78px;color:#e6e6e6">Options</div>
<svg style="left:1030px;top:80px" width="8" height="6"><use href="#i-chev"/></svg>
<div class="tg" style="left:525px;top:101px;height:62px"><div class="a" style="left:0;top:0;width:35px;height:31px;background:#4772b3;border-radius:5px 5px 0 0"></div><div class="dv" style="top:31px"></div></div>
<svg style="left:530.0px;top:103.5px" width="25" height="25"><use href="#t-select"/></svg>
<svg style="left:530.0px;top:134.5px" width="25" height="25"><use href="#t-cursor"/></svg>
<div class="tg" style="left:525px;top:168.5px;height:123px"><div class="dv" style="top:30px"></div><div class="dv" style="top:61px"></div><div class="dv" style="top:92px"></div></div>
<svg style="left:530.0px;top:170.5px" width="25" height="25"><use href="#t-move"/></svg>
<svg style="left:530.0px;top:201.5px" width="25" height="25"><use href="#t-rotate"/></svg>
<svg style="left:530.0px;top:232.5px" width="25" height="25"><use href="#t-scale"/></svg>
<svg style="left:530.0px;top:263.5px" width="25" height="25"><use href="#t-xform"/></svg>
<div class="tg" style="left:525px;top:297px;height:61px"><div class="dv" style="top:30px"></div></div>
<svg style="left:530.0px;top:298.5px" width="25" height="25"><use href="#t-annot"/></svg>
<svg style="left:530.0px;top:329.5px" width="25" height="25"><use href="#t-measure"/></svg>
<div class="tg" style="left:525px;top:364px;height:29px"></div>
<svg style="left:530.0px;top:365.5px" width="25" height="25"><use href="#t-add"/></svg>
<div class="ov" style="left:576px;top:104px;color:#f6f6f6;text-shadow:0 0 1px #111,0 0 1px #111,0 0 1px #111">User Perspective</div>
<div class="ov" style="left:576px;top:120px;color:#f6f6f6;text-shadow:0 0 1px #111,0 0 1px #111,0 0 1px #111">(1) Collection | Camera</div>
<svg style="left:960px;top:120px" width="80" height="60" viewBox="960 120 80 60">
<circle cx="976.5" cy="139.7" r="6.8" fill="#8a3a48" stroke="#d84058" stroke-width="1.3"/>
<line x1="1005" y1="137" x2="1033" y2="135.5" stroke="#e0304a" stroke-width="2"/>
<line x1="1005" y1="128" x2="1005" y2="137" stroke="#2a9a60" stroke-width="2"/>
<circle cx="1005" cy="164" r="6.5" fill="#34445a" stroke="#4a80c8" stroke-width="1.3"/>
<circle cx="1009" cy="151.3" r="7" fill="#4a6a2a" stroke="#a0cc40" stroke-width="1.5"/>
<circle cx="1033.5" cy="135.5" r="7.3" fill="#e8334f"/>
<text x="1033.5" y="139" font-family="Liberation Sans" font-size="9.5" font-weight="bold" text-anchor="middle" fill="#401018">X</text>
</svg>
<path d="" />
<div class="a" style="left:1043px;top:108px;width:8px;height:18px;background:#333;border-radius:3px 0 0 3px"></div>
<svg style="left:1044px;top:113px" width="6" height="8" viewBox="0 0 6 8"><path d="M4.5 1 L1.5 4 L4.5 7" stroke="#aaa" stroke-width="1.1" fill="none"/></svg>
<div class="nb" style="left:1017.5px;top:174.5px;background:#2c2c2c"></div><svg style="left:1017.5px;top:174.5px" width="24" height="24"><use href="#n-zoom"/></svg>
<div class="nb" style="left:1017.5px;top:201px;background:#2c2c2c"></div><svg style="left:1017.5px;top:201px" width="24" height="24"><use href="#n-hand"/></svg>
<div class="nb" style="left:1017.5px;top:228px;background:#2c2c2c"></div><svg style="left:1017.5px;top:228px" width="24" height="24"><use href="#n-cam"/></svg>
<div class="nb" style="left:1017.5px;top:254.5px;background:#2c2c2c"></div><svg style="left:1017.5px;top:254.5px" width="24" height="24"><use href="#n-grid"/></svg>

<!-- outliner -->
<div class="a" style="left:1054px;top:48px;width:223px;height:249px;background:#282828;border-radius:6px;box-shadow:inset 0 0 0 1px #343434"></div>
<div class="hb" style="left:1063px;top:50px;width:26px;height:17px;background:#232323"></div>
<svg style="left:1065px;top:51px" width="24" height="15" viewBox="0 0 24 15"><rect x="1" y="1.5" width="5" height="3" fill="#ddd"/><path d="M3 4.5 V12 H6 M3 8 H6" stroke="#ddd" stroke-width="1"/><rect x="6" y="6.5" width="6" height="3" fill="#ddd"/><rect x="6" y="10.5" width="6" height="3" fill="#ddd"/><path d="M15 6 l2.5 2.5 l2.5 -2.5" stroke="#ddd" stroke-width="1.2" fill="none"/></svg>
<div class="hb" style="left:1096px;top:50px;width:26px;height:17px;background:#232323"></div>
<svg style="left:1098px;top:51px" width="24" height="15" viewBox="0 0 24 15"><rect x="1" y="4" width="9" height="9" fill="none" stroke="#bbb" stroke-width="1"/><rect x="3" y="2" width="9" height="9" fill="#ddd"/><path d="M4 10 L7 5 L10 10Z" fill="#333"/><path d="M15 6 l2.5 2.5 l2.5 -2.5" stroke="#ddd" stroke-width="1.2" fill="none"/></svg>
<div class="hb" style="left:1136px;top:50px;width:102px;height:17px;background:#1e1e1e"></div>
<svg style="left:1141px;top:52px" width="13" height="13" viewBox="0 0 13 13"><circle cx="5" cy="5" r="3.8" fill="none" stroke="#ddd" stroke-width="1.3"/><path d="M8 8 L12 12" stroke="#ddd" stroke-width="1.4"/></svg>
<div class="t" style="left:1159px;top:54px;color:#6a6a6a">Search</div>
<div class="hb" style="left:1252px;top:50px;width:24px;height:17px;background:#232323"></div>
<svg style="left:1255px;top:52px" width="14" height="13" viewBox="0 0 14 13"><path d="M1 1 H13 L8.5 6.5 V12 L5.5 10 V6.5 Z" fill="none" stroke="#ddd" stroke-width="1.2"/></svg>
<svg style="left:1074px;top:75px" width="12" height="12"><use href="#o-box"/></svg>
<div class="or" style="left:1093px;top:76px">Scene Collection</div>
<svg style="left:1077px;top:96px" width="8" height="5"><use href="#o-chevd"/></svg>
<div class="a" style="left:1090px;top:91px;width:16px;height:16px;background:#3a3a3a;border-radius:3px"></div>
<svg style="left:1092px;top:93px" width="12" height="12"><use href="#o-box"/></svg>
<div class="or" style="left:1111px;top:94px;color:#e8e8e8">Collection</div>
<div class="a" style="left:1220px;top:94px;width:9px;height:9px;background:#e8e8e8;border-radius:2px"></div>
<svg style="left:1221px;top:95px" width="7" height="7" viewBox="0 0 7 7"><path d="M1 3.5 L3 5.5 L6 1.5" stroke="#222" stroke-width="1.3" fill="none"/></svg>
<svg style="left:1236px;top:94.5px" width="13" height="10"><use href="#o-eye"/></svg>
<svg style="left:1254px;top:93.5px" width="13" height="12"><use href="#o-cam"/></svg>
<div class="a" style="left:1079px;top:107px;width:1px;height:156px;background:#3c3c3c"></div>
<div class="a" style="left:1056px;top:108px;width:220px;height:16px;background:#344f7e;border-radius:3px;border:1px solid #4a6aa6"></div>
<svg style="left:1096px;top:112px" width="5" height="9"><use href="#o-chevr"/></svg>
<div class="a" style="left:1107px;top:109px;width:18px;height:15px;background:#8a6a55;border-radius:3px;opacity:.55"></div>
<svg style="left:1108px;top:110px" width="15" height="13"><use href="#o-camobj"/></svg>
<div class="or" style="left:1128.5px;top:112px;color:#ecc9a6">Camera</div>
<div class="a" style="left:1180px;top:109px;width:18px;height:15px;background:#4a7a8a;border-radius:3px;opacity:.7"></div>
<svg style="left:1182px;top:110px" width="15" height="13"><use href="#o-camdata"/></svg>
<svg style="left:1236px;top:112px" width="13" height="10"><use href="#o-eye"/></svg>
<svg style="left:1254px;top:111px" width="13" height="12"><use href="#o-cam"/></svg>
<svg style="left:1096px;top:129.8px" width="5" height="9"><use href="#o-chevr"/></svg>
<svg style="left:1109px;top:127.8px" width="13" height="13"><use href="#o-mesh"/></svg>
<div class="or" style="left:1128.5px;top:129.8px">Mesh_0</div>
<svg style="left:1183px;top:127.8px" width="13" height="13"><use href="#o-meshdata"/></svg>
<svg style="left:1236px;top:129.8px" width="13" height="10"><use href="#o-eye"/></svg>
<svg style="left:1254px;top:128.8px" width="13" height="12"><use href="#o-cam"/></svg>
<svg style="left:1096px;top:147.6px" width="5" height="9"><use href="#o-chevr"/></svg>
<svg style="left:1109px;top:145.6px" width="13" height="13"><use href="#o-mesh"/></svg>
<div class="or" style="left:1128.5px;top:147.6px">Mesh_1</div>
<svg style="left:1183px;top:145.6px" width="13" height="13"><use href="#o-meshdata"/></svg>
<svg style="left:1236px;top:147.6px" width="13" height="10"><use href="#o-eye"/></svg>
<svg style="left:1254px;top:146.6px" width="13" height="12"><use href="#o-cam"/></svg>
<svg style="left:1096px;top:165.4px" width="5" height="9"><use href="#o-chevr"/></svg>
<svg style="left:1109px;top:163.4px" width="13" height="13"><use href="#o-mesh"/></svg>
<div class="or" style="left:1128.5px;top:165.4px">Mesh_2</div>
<svg style="left:1183px;top:163.4px" width="13" height="13"><use href="#o-meshdata"/></svg>
<svg style="left:1236px;top:165.4px" width="13" height="10"><use href="#o-eye"/></svg>
<svg style="left:1254px;top:164.4px" width="13" height="12"><use href="#o-cam"/></svg>
<svg style="left:1096px;top:183.1px" width="5" height="9"><use href="#o-chevr"/></svg>
<svg style="left:1109px;top:181.1px" width="13" height="13"><use href="#o-mesh"/></svg>
<div class="or" style="left:1128.5px;top:183.1px">Mesh_3</div>
<svg style="left:1183px;top:181.1px" width="13" height="13"><use href="#o-meshdata"/></svg>
<svg style="left:1236px;top:183.1px" width="13" height="10"><use href="#o-eye"/></svg>
<svg style="left:1254px;top:182.1px" width="13" height="12"><use href="#o-cam"/></svg>
<svg style="left:1096px;top:200.8px" width="5" height="9"><use href="#o-chevr"/></svg>
<svg style="left:1109px;top:198.8px" width="13" height="13"><use href="#o-mesh"/></svg>
<div class="or" style="left:1128.5px;top:200.8px">Mesh_4</div>
<svg style="left:1183px;top:198.8px" width="13" height="13"><use href="#o-meshdata"/></svg>
<svg style="left:1236px;top:200.8px" width="13" height="10"><use href="#o-eye"/></svg>
<svg style="left:1254px;top:199.8px" width="13" height="12"><use href="#o-cam"/></svg>
<svg style="left:1096px;top:218.6px" width="5" height="9"><use href="#o-chevr"/></svg>
<svg style="left:1109px;top:216.6px" width="13" height="13"><use href="#o-mesh"/></svg>
<div class="or" style="left:1128.5px;top:218.6px">Plane</div>
<svg style="left:1173px;top:216.6px" width="13" height="13"><use href="#o-wrench"/></svg>
<svg style="left:1191px;top:216.6px" width="13" height="13"><use href="#o-meshdata"/></svg>
<svg style="left:1236px;top:218.6px" width="13" height="10"><use href="#o-eye"/></svg>
<svg style="left:1254px;top:217.6px" width="13" height="12"><use href="#o-cam"/></svg>
<svg style="left:1096px;top:236.4px" width="5" height="9"><use href="#o-chevr"/></svg>
<svg style="left:1109px;top:234.4px" width="13" height="13"><use href="#o-light"/></svg>
<div class="or" style="left:1128.5px;top:236.4px">Point 1</div>
<svg style="left:1181px;top:234.4px" width="13" height="13"><use href="#o-lightdata"/></svg>
<svg style="left:1236px;top:236.4px" width="13" height="10"><use href="#o-eye"/></svg>
<svg style="left:1254px;top:235.4px" width="13" height="12"><use href="#o-cam"/></svg>
<svg style="left:1096px;top:254.2px" width="5" height="9"><use href="#o-chevr"/></svg>
<svg style="left:1109px;top:252.2px" width="13" height="13"><use href="#o-light"/></svg>
<div class="or" style="left:1128.5px;top:254.2px">Point 2</div>
<svg style="left:1181px;top:252.2px" width="13" height="13"><use href="#o-lightdata"/></svg>
<svg style="left:1236px;top:254.2px" width="13" height="10"><use href="#o-eye"/></svg>
<svg style="left:1254px;top:253.2px" width="13" height="12"><use href="#o-cam"/></svg>

<!-- properties -->
<div class="a" style="left:0;top:0;width:1280px;height:777px;clip-path:inset(301px 3px 22px 1054px round 6px)">
<div class="a" style="left:1054px;top:301px;width:223px;height:454px;background:#2c2c2c;border-radius:6px;overflow:hidden;box-shadow:inset 0 0 0 1px #353535">
 <div class="a" style="left:0;top:23px;width:26px;height:431px;background:#1b1b1b"></div>
 <div class="a" style="left:26px;top:23px;width:197px;height:431px;background:#2e2e2e"></div>
</div>
<div class="hb" style="left:1064px;top:304px;width:23px;height:17px;background:#262626"></div>
<svg style="left:1065px;top:305px" width="22" height="15" viewBox="0 0 22 15"><rect x="1" y="1" width="10" height="5.5" rx="2.75" fill="#ddd"/><circle cx="8.25" cy="3.75" r="1.8" fill="#222"/><rect x="1" y="8" width="10" height="5.5" rx="2.75" fill="#ddd"/><circle cx="8.25" cy="10.75" r="1.8" fill="#222"/><path d="M14 6 l2.5 2.5 l2.5 -2.5" stroke="#ddd" stroke-width="1.2" fill="none"/></svg>
<div class="hb" style="left:1114px;top:304px;width:101px;height:16px;background:#1e1e1e"></div>
<svg style="left:1119px;top:305px" width="13" height="13" viewBox="0 0 13 13"><circle cx="5" cy="5" r="3.8" fill="none" stroke="#ddd" stroke-width="1.3"/><path d="M8 8 L12 12" stroke="#ddd" stroke-width="1.4"/></svg>
<div class="t" style="left:1137px;top:308px;color:#6a6a6a">Search</div>
<div class="hb" style="left:1254px;top:304px;width:16px;height:16px;background:#262626"></div>
<svg style="left:1258px;top:310px" width="8" height="6"><use href="#i-chev"/></svg>
<!-- tabs -->
<svg style="left:1059px;top:335px" width="16" height="16"><use href="#p-tool"/></svg>
<svg style="left:1059px;top:367px" width="16" height="16"><use href="#p-render"/></svg>
<svg style="left:1059px;top:391.5px" width="16" height="16"><use href="#p-output"/></svg>
<svg style="left:1059px;top:417px" width="16" height="16"><use href="#p-viewlayer"/></svg>
<svg style="left:1059px;top:441px" width="16" height="16"><use href="#p-scene"/></svg>
<svg style="left:1059px;top:467px" width="16" height="16"><use href="#p-world"/></svg>
<svg style="left:1059px;top:497.5px" width="16" height="16"><use href="#p-coll"/></svg>
<svg style="left:1059px;top:531px" width="16" height="16"><use href="#p-obj"/></svg>
<svg style="left:1059px;top:555px" width="16" height="16"><use href="#p-phys"/></svg>
<svg style="left:1059px;top:581px" width="16" height="16"><use href="#p-cons"/></svg>
<div class="a" style="left:1056px;top:601px;width:26px;height:26px;background:#2f4a3e;border-radius:4px 0 0 4px"></div>
<svg style="left:1058.5px;top:606px" width="18" height="16"><use href="#p-camdata"/></svg>
<svg style="left:1063px;top:639px" width="8" height="6"><use href="#o-chevd"/></svg>
<!-- breadcrumb -->
<svg style="left:1088px;top:333px" width="14" height="14"><use href="#i-objmode"/></svg>
<div class="t" style="left:1109.5px;top:336px;color:#dcdcdc">Camera</div>
<svg style="left:1159px;top:335.5px" width="6" height="9"><use href="#o-chevr"/></svg>
<svg style="left:1171px;top:333px" width="16" height="14"><use href="#p-camw"/></svg>
<div class="t" style="left:1193.5px;top:336px;color:#dcdcdc">Camera</div>
<svg style="left:1256px;top:333px" width="13" height="13" viewBox="0 0 13 13"><path d="M7 1 L12 6 M9.5 3.5 L4.5 6 L7 8.5 L9.5 3.5 M5.5 7.5 L1 12" stroke="#999" stroke-width="1.2" fill="none"/></svg>
<!-- datablock -->
<svg style="left:1089px;top:364px" width="16" height="15"><use href="#p-camw"/></svg>
<svg style="left:1106px;top:370px" width="8" height="6"><use href="#i-chev"/></svg>
<div class="a" style="left:1116px;top:364px;width:154px;height:16px;background:#1e1e1e;border-radius:4px"></div>
<div class="a" style="left:1252px;top:364px;width:18px;height:16px;background:#595959;border-radius:0 4px 4px 0"></div>
<svg style="left:1255px;top:366px" width="12" height="12" viewBox="0 0 12 12"><path d="M6 1 L11 2.5 V6 Q10.5 10 6 11.5 Q1.5 10 1 6 V2.5Z" fill="none" stroke="#bbb" stroke-width="1.2"/></svg>
<div class="t" style="left:1121px;top:368px;color:#e8e8e8">Camera</div>
<!-- Lens panel -->
<div class="pn" style="top:390px;height:194px"></div>
<svg style="left:1094px;top:399px" width="9" height="6"><use href="#o-chevd"/></svg>
<div class="t" style="left:1106px;top:396.5px;color:#e0e0e0">Lens</div>
<div class="grip" style="left:1254px;top:399px"></div>
<div class="pl" style="left:1090px;width:61px;top:423.5px">Type</div>
<div class="pd" style="left:1159.5px;top:420px;width:85px;height:16.5px;background:#2a2a2a"></div>
<div class="t" style="left:1165px;top:423.5px;color:#e8e8e8">Perspective</div>
<svg style="left:1234px;top:426px" width="8" height="6"><use href="#i-chev"/></svg>
<div class="dot" style="left:1253px;top:426.5px"></div>
<div class="pl" style="left:1070px;width:81px;top:452.5px">Focal Len...</div>
<div class="pf" style="left:1159.5px;top:449px;width:85px;height:16.5px"></div>
<div class="t" style="left:1185px;top:452.5px;color:#e8e8e8">70 mm</div>
<div class="dot" style="left:1253px;top:455.5px"></div>
<div class="pl" style="left:1070px;width:81px;top:472.5px">Lens Unit</div>
<div class="pd" style="left:1159.5px;top:469px;width:85px;height:16.5px;background:#2a2a2a"></div>
<div class="t" style="left:1165px;top:472.5px;color:#e8e8e8">Millimeters</div>
<svg style="left:1234px;top:475px" width="8" height="6"><use href="#i-chev"/></svg>
<div class="dot" style="left:1253px;top:475.5px"></div>
<div class="pl" style="left:1070px;width:81px;top:501.5px">Shift X</div>
<div class="pd" style="left:1159.5px;top:498px;width:85px;height:16.5px;background:#1e1e1e;border-radius:4px 4px 0 0"></div>
<div class="a" style="left:1166px;top:499.5px;width:27px;height:13px;background:#4a72b8"></div>
<div class="a" style="left:1166px;top:500px;width:1px;height:12px;background:#fff"></div>
<div class="t" style="left:1166px;top:501.5px;color:#fff">-0.07</div>
<div class="dot" style="left:1253px;top:504px"></div>
<div class="pl" style="left:1070px;width:81px;top:519.5px">Y</div>
<div class="pf" style="left:1159.5px;top:515px;width:85px;height:17px;border-radius:0 0 4px 4px"></div>
<div class="t" style="left:1188px;top:519.5px;color:#e8e8e8">0.290</div>
<div class="dot" style="left:1253px;top:522px"></div>
<div class="pl" style="left:1070px;width:81px;top:546px">Clip Start</div>
<div class="pf" style="left:1159.5px;top:542.5px;width:85px;height:16.5px;border-radius:4px 4px 0 0"></div>
<div class="t" style="left:1191px;top:546px;color:#e8e8e8">0.1"</div>
<div class="dot" style="left:1253px;top:549px"></div>
<div class="pl" style="left:1070px;width:81px;top:563.5px">End</div>
<div class="pf" style="left:1159.5px;top:559.5px;width:85px;height:17px;border-radius:0 0 4px 4px"></div>
<div class="t" style="left:1190px;top:563.5px;color:#e8e8e8">300"</div>
<div class="dot" style="left:1253px;top:566.5px"></div>
<!-- collapsed panels -->
<div class="pn" style="top:587px;height:21px"></div>
<svg style="left:1096px;top:593px" width="6" height="9"><use href="#o-chevr"/></svg>
<div class="t" style="left:1106px;top:593px;color:#e0e0e0">Camera</div>
<svg style="left:1233px;top:591px" width="13" height="13"><use href="#p-sliders"/></svg>
<div class="grip" style="left:1254px;top:595.5px"></div>
<div class="pn" style="top:611px;height:21px"></div>
<svg style="left:1096px;top:617px" width="6" height="9"><use href="#o-chevr"/></svg>
<div class="a" style="left:1106px;top:615.5px;width:11px;height:11px;background:#545454;border-radius:2px"></div>
<div class="t" style="left:1119px;top:617px;color:#e0e0e0">Safe Areas</div>
<svg style="left:1233px;top:615px" width="13" height="13"><use href="#p-sliders"/></svg>
<div class="grip" style="left:1254px;top:619.5px"></div>
<div class="pn" style="top:635px;height:21px"></div>
<svg style="left:1096px;top:641px" width="6" height="9"><use href="#o-chevr"/></svg>
<div class="a" style="left:1106px;top:639.5px;width:11px;height:11px;background:#545454;border-radius:2px"></div>
<div class="t" style="left:1119px;top:641px;color:#e0e0e0">Background Images</div>
<div class="grip" style="left:1254px;top:643.5px"></div>
<div class="pn" style="top:659px;height:21px"></div>
<svg style="left:1096px;top:665px" width="6" height="9"><use href="#o-chevr"/></svg>
<div class="t" style="left:1106px;top:665px;color:#e0e0e0">Viewport Display</div>
<div class="grip" style="left:1254px;top:667.5px"></div>
<div class="pn" style="top:683px;height:80px"></div>
<svg style="left:1094px;top:692px" width="9" height="6"><use href="#o-chevd"/></svg>
<div class="a" style="left:1106px;top:688.5px;width:11px;height:11px;background:#545454;border-radius:2px"></div>
<div class="t" style="left:1119px;top:689.5px;color:#e0e0e0">Depth of Field</div>
<div class="grip" style="left:1254px;top:691.5px"></div>
<div class="pl" style="left:1070px;width:81px;top:716px;color:#7a7a7a">Focus on ...</div>
<div class="pd" style="left:1160px;top:712px;width:85px;height:16px;background:#333"></div>
<svg style="left:1164px;top:714px;opacity:.35" width="12" height="12"><use href="#i-objmode"/></svg>
<div class="t" style="left:1183px;top:716px;color:#5e5e5e">Object</div>
<svg style="left:1229px;top:713px" width="13" height="13"><use href="#p-pipette"/></svg>
<div class="pl" style="left:1070px;width:81px;top:735.5px;color:#7a7a7a">Focus Dist...</div>
<div class="pf" style="left:1160px;top:732px;width:85px;height:16px;background:#3f3f3f"></div>
<div class="t" style="left:1178px;top:735.5px;color:#8a8a8a">393.7"</div>
<svg style="left:1229px;top:733px" width="13" height="13"><use href="#p-pipette"/></svg>
<div class="dot" style="left:1253px;top:738px;background:#666"></div>
</div>

<!-- timeline -->
<div class="a" style="left:3px;top:706px;width:1048px;height:51px;background:#1f1f1f;border-radius:6px;overflow:hidden">
 <div class="a" style="left:0;top:0;width:1048px;height:24px;background:#303030"></div>
</div>
<div class="hb" style="left:12px;top:709px;width:24px;height:17px;background:#262626"></div>
<svg style="left:13px;top:710px" width="22" height="15" viewBox="0 0 22 15"><circle cx="7" cy="7.5" r="6.2" fill="#ececec"/><path d="M8.5 3.5 L5 7.5 L8.5 11.5" stroke="#262626" stroke-width="1.8" fill="none"/><path d="M14 6 l2.5 2.5 l2.5 -2.5" stroke="#ddd" stroke-width="1.2" fill="none"/></svg>
<div class="t" style="left:48.5px;top:713px;color:#d6d6d6">View</div>
<div class="t" style="left:83.5px;top:713px;color:#d6d6d6">Marker</div>
<div class="hb" style="left:127.5px;top:709px;width:62px;height:17px;background:#282828"></div>
<div class="t" style="left:133.5px;top:713px;color:#e6e6e6">Playback</div>
<svg style="left:179px;top:715px" width="8" height="6"><use href="#i-chev"/></svg>
<div class="hb" style="left:395px;top:709px;width:17px;height:17px;background:#3d3d3d"></div>
<svg style="left:397px;top:711px" width="13" height="13" viewBox="0 0 13 13"><circle cx="6.5" cy="6.5" r="5" fill="none" stroke="#aaa" stroke-width="1.2"/></svg>
<svg style="left:415px;top:715px" width="8" height="6" viewBox="0 0 8 6"><path d="M1 1.5 L4 4.5 L7 1.5" stroke="#666" stroke-width="1.3" fill="none"/></svg>
<div class="hb" style="left:435px;top:709px;width:104px;height:17px;background:#3d3d3d"></div>
<svg style="left:435px;top:709px" width="104" height="17" viewBox="0 0 104 17">
<g fill="#e8e8e8"><rect x="6" y="4" width="1.5" height="9"/><path d="M16 4 V13 L9 8.5Z"/>
<path d="M22 8.5 L26 4.5 L30 8.5 L26 12.5Z"/><path d="M37 4 V13 L31 8.5Z"/>
<path d="M49 3.5 V13.5 L41 8.5Z"/>
<path d="M58 3.5 V13.5 L66 8.5Z"/>
<path d="M70 4 V13 L76 8.5Z"/><path d="M77 8.5 L81 4.5 L85 8.5 L81 12.5Z"/>
<path d="M88 4 V13 L95 8.5Z"/><rect x="96" y="4" width="1.5" height="9"/></g></svg>
<div class="hb" style="left:546px;top:709px;width:34px;height:17px;background:#3d3d3d"></div>
<svg style="left:546px;top:709px" width="34" height="17" viewBox="0 0 34 17"><g fill="#e8e8e8"><path d="M12 4 V13 L6 8.5Z"/><rect x="13" y="4" width="1.5" height="9"/><rect x="19.5" y="4" width="1.5" height="9"/><path d="M22 4 V13 L28 8.5Z"/></g></svg>
<svg style="left:584px;top:715px" width="8" height="6"><use href="#i-chev"/></svg>
<div class="hb" style="left:602.5px;top:709px;width:19px;height:17px;background:#3d3d3d"></div>
<svg style="left:605px;top:711px" width="14" height="13" viewBox="0 0 14 13"><path d="M3 10 V6 A4 4 0 0 1 11 6 V10 M6 10 V6.5 A1 1 0 0 1 8 6.5 V10" stroke="#ddd" stroke-width="1.2" fill="none"/><path d="M1 12 H13" stroke="#ddd" stroke-width="1"/></svg>
<svg style="left:625px;top:715px" width="8" height="6"><use href="#i-chev"/></svg>
<div class="pf" style="left:751px;top:710px;width:65px;height:16px;background:#545454"></div>
<div class="t" style="left:780px;top:713px;color:#e8e8e8">1</div>
<div class="hb" style="left:822px;top:709px;width:17px;height:17px;background:#3d3d3d"></div>
<svg style="left:824px;top:710px" width="14" height="15" viewBox="0 0 14 15"><circle cx="7" cy="8.5" r="5" fill="none" stroke="#ddd" stroke-width="1.4"/><path d="M7 8.5 V5.5 M5.5 1.5 H8.5 M11 4 L12 3" stroke="#ddd" stroke-width="1.3"/></svg>
<div class="pf" style="left:839px;top:710px;width:77px;height:16px;background:#545454;border-radius:0 4px 4px 0"></div>
<div class="t" style="left:852.5px;top:713px;color:#e8e8e8">Start</div>
<div class="t" style="left:899px;top:713px;color:#e8e8e8">1</div>
<div class="pf" style="left:918px;top:710px;width:75px;height:16px;background:#545454"></div>
<div class="t" style="left:931.5px;top:713px;color:#e8e8e8">End</div>
<div class="t" style="left:962.5px;top:713px;color:#e8e8e8">250</div>
<div class="hb" style="left:1008.5px;top:709px;width:17px;height:17px;background:#4772b3"></div>
<svg style="left:1009.5px;top:710px" width="15" height="15" viewBox="0 0 15 15"><circle cx="7.5" cy="8" r="5" fill="none" stroke="#eee" stroke-width="1.5"/><circle cx="9" cy="5.5" r="3" fill="#eee"/></svg>
<svg style="left:1029px;top:715px" width="8" height="6"><use href="#i-chev"/></svg>
<!-- scrubbing row -->
<div class="a" style="left:5px;top:750px;width:1040px;height:5px;background:#2e2e2e;border-radius:1px"></div>
<div class="t" style="left:52.5px;width:60px;text-align:center;top:735.5px;color:#ababab">12</div>
<div class="a" style="left:82.5px;top:750px;width:1px;height:5px;background:#3c3c3c"></div>
<div class="t" style="left:100px;width:60px;text-align:center;top:735.5px;color:#ababab">24</div>
<div class="a" style="left:130px;top:750px;width:1px;height:5px;background:#3c3c3c"></div>
<div class="t" style="left:146.5px;width:60px;text-align:center;top:735.5px;color:#ababab">36</div>
<div class="a" style="left:176.5px;top:750px;width:1px;height:5px;background:#3c3c3c"></div>
<div class="t" style="left:193.5px;width:60px;text-align:center;top:735.5px;color:#ababab">48</div>
<div class="a" style="left:223.5px;top:750px;width:1px;height:5px;background:#3c3c3c"></div>
<div class="t" style="left:240.5px;width:60px;text-align:center;top:735.5px;color:#ababab">60</div>
<div class="a" style="left:270.5px;top:750px;width:1px;height:5px;background:#3c3c3c"></div>
<div class="t" style="left:287px;width:60px;text-align:center;top:735.5px;color:#ababab">72</div>
<div class="a" style="left:317px;top:750px;width:1px;height:5px;background:#3c3c3c"></div>
<div class="t" style="left:334.5px;width:60px;text-align:center;top:735.5px;color:#ababab">84</div>
<div class="a" style="left:364.5px;top:750px;width:1px;height:5px;background:#3c3c3c"></div>
<div class="t" style="left:381px;width:60px;text-align:center;top:735.5px;color:#ababab">96</div>
<div class="a" style="left:411px;top:750px;width:1px;height:5px;background:#3c3c3c"></div>
<div class="t" style="left:428.5px;width:60px;text-align:center;top:735.5px;color:#ababab">108</div>
<div class="a" style="left:458.5px;top:750px;width:1px;height:5px;background:#3c3c3c"></div>
<div class="t" style="left:474px;width:60px;text-align:center;top:735.5px;color:#ababab">120</div>
<div class="a" style="left:504px;top:750px;width:1px;height:5px;background:#3c3c3c"></div>
<div class="t" style="left:521px;width:60px;text-align:center;top:735.5px;color:#ababab">132</div>
<div class="a" style="left:551px;top:750px;width:1px;height:5px;background:#3c3c3c"></div>
<div class="t" style="left:568px;width:60px;text-align:center;top:735.5px;color:#ababab">144</div>
<div class="a" style="left:598px;top:750px;width:1px;height:5px;background:#3c3c3c"></div>
<div class="t" style="left:614.5px;width:60px;text-align:center;top:735.5px;color:#ababab">156</div>
<div class="a" style="left:644.5px;top:750px;width:1px;height:5px;background:#3c3c3c"></div>
<div class="t" style="left:661px;width:60px;text-align:center;top:735.5px;color:#ababab">168</div>
<div class="a" style="left:691px;top:750px;width:1px;height:5px;background:#3c3c3c"></div>
<div class="t" style="left:707.5px;width:60px;text-align:center;top:735.5px;color:#ababab">180</div>
<div class="a" style="left:737.5px;top:750px;width:1px;height:5px;background:#3c3c3c"></div>
<div class="t" style="left:755px;width:60px;text-align:center;top:735.5px;color:#ababab">192</div>
<div class="a" style="left:785px;top:750px;width:1px;height:5px;background:#3c3c3c"></div>
<div class="t" style="left:801.5px;width:60px;text-align:center;top:735.5px;color:#ababab">204</div>
<div class="a" style="left:831.5px;top:750px;width:1px;height:5px;background:#3c3c3c"></div>
<div class="t" style="left:848.5px;width:60px;text-align:center;top:735.5px;color:#ababab">216</div>
<div class="a" style="left:878.5px;top:750px;width:1px;height:5px;background:#3c3c3c"></div>
<div class="t" style="left:895px;width:60px;text-align:center;top:735.5px;color:#ababab">228</div>
<div class="a" style="left:925px;top:750px;width:1px;height:5px;background:#3c3c3c"></div>
<div class="t" style="left:942.5px;width:60px;text-align:center;top:735.5px;color:#ababab">240</div>
<div class="a" style="left:972.5px;top:750px;width:1px;height:5px;background:#3c3c3c"></div>
<div class="t" style="left:989px;width:60px;text-align:center;top:735.5px;color:#ababab">252</div>
<div class="a" style="left:1019px;top:750px;width:1px;height:5px;background:#3c3c3c"></div>
<div class="a" style="left:31px;top:731px;width:19px;height:15px;background:#4772b3;border-radius:3px"></div>
<svg style="left:36px;top:745px" width="9" height="6" viewBox="0 0 9 6"><path d="M0 0 H9 L4.5 5Z" fill="#4772b3"/></svg>
<div class="a" style="left:40px;top:750px;width:1px;height:7px;background:#4772b3"></div>
<div class="t" style="left:31px;width:19px;text-align:center;top:735px;color:#fff">1</div>
<!-- status bar -->
<svg style="left:5px;top:759px" width="15" height="15" viewBox="0 0 15 15"><rect x="0.5" y="0.5" width="14" height="14" rx="3" fill="none" stroke="#888" stroke-width="1"/><path d="M11 3.5 V8.5 H4 M6.5 6 L4 8.5 L6.5 11" stroke="#bbb" stroke-width="1.2" fill="none"/></svg>
<div class="t" style="left:21.5px;top:762px;color:#9a9a9a">Confirm</div>
<div class="a" style="left:66px;top:759px;width:20px;height:15px;border:1px solid #888;border-radius:3px"></div>
<div class="t" style="left:68px;top:762px;color:#bbb">Esc</div>
<div class="t" style="left:89px;top:762px;color:#9a9a9a">Cancel</div>
<svg style="left:1221px;top:759px" width="15" height="15" viewBox="0 0 15 15"><path d="M1.5 7.5 Q7.5 1 13.5 7.5 Q7.5 14 1.5 7.5Z" fill="none" stroke="#aaa" stroke-width="1.2"/><circle cx="7.5" cy="7.5" r="2" fill="#aaa"/><path d="M2 1.5 L13 13.5" stroke="#aaa" stroke-width="1.3"/></svg>
<div class="a" style="left:1241px;top:760px;width:1px;height:13px;background:#888"></div>
<div class="t" style="left:1245px;top:762px;color:#b8b8b8">5.0.0</div>

<svg style="left:0;top:0" width="1280" height="777">
<path d="M777 108.6 H981 V90 L1032 116 L981 137 V122.6 H777 A7 7 0 0 1 777 108.6 Z" fill="#1a84f3"/>
<path d="M778 607.8 H983 V589 L1033.4 614.7 L983 640 V621.5 H778 A6.85 6.85 0 0 1 778 607.8 Z" fill="#1a84f3"/>
</svg>
</body></html>
